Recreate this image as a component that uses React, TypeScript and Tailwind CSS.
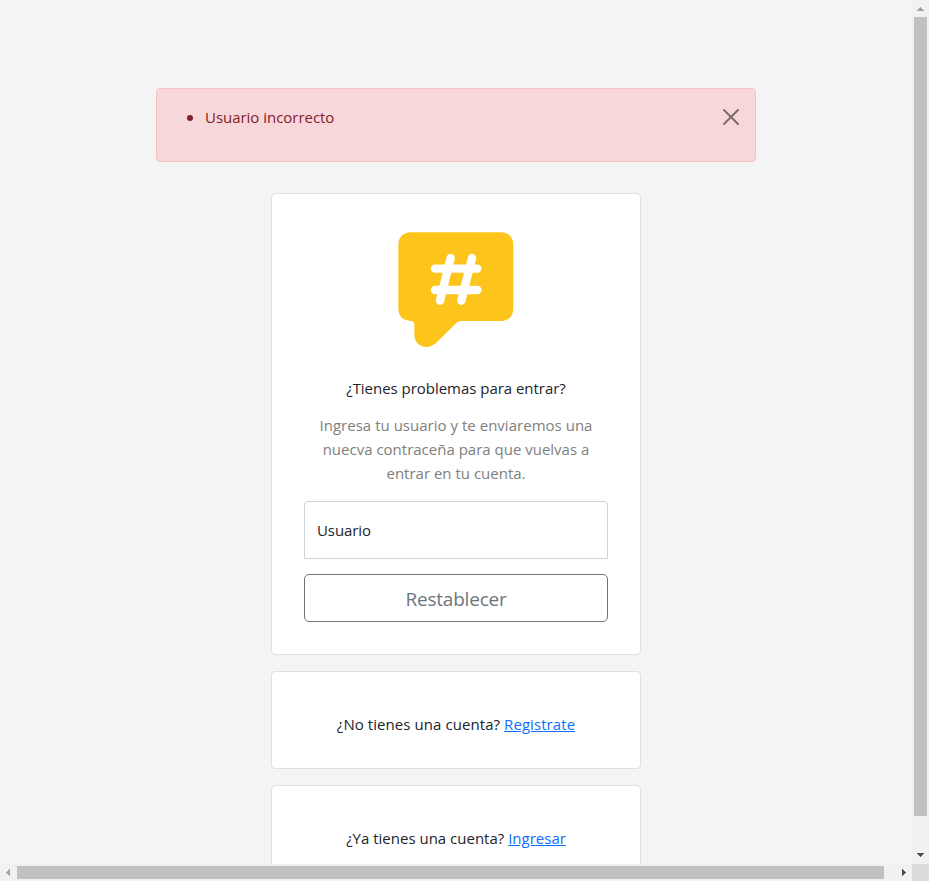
import type { ReactNode } from 'react';

function HashBubble() {
  return (
    <svg className="mx-auto block h-[116px] w-[116px]" viewBox="54 36 348 348" aria-hidden="true">
      <path
        fill="#fdc51b"
        d="M94 37H362Q400 39 400 76V264Q400 302 362 303H243Q235 303 229 309L169 368C145 391 103 383 103 343V314Q103 303 92 303Q55 300 55 264V76Q55 39 94 37Z"
      />
      <path
        d="M165 146H292M165 210H292M212 114L180 242M276 114L244 242"
        stroke="#fff"
        strokeWidth="25"
        strokeLinecap="round"
        fill="none"
      />
    </svg>
  );
}

function Card({ className, children }: { className: string; children: ReactNode }) {
  return (
    <section className={`w-[370px] shrink-0 rounded border border-[#dfdfdf] bg-white px-8 text-center ${className}`}>
      {children}
    </section>
  );
}

function Alert() {
  return (
    <div className="flex h-[74px] w-[600px] shrink-0 items-start justify-between rounded border border-[#f5c2c7] bg-[#f8d7da] py-4 pr-4 pl-[30px] text-[#842029]">
      <div className="flex items-center">
        <span className="mt-px mr-[12px] h-1.5 w-1.5 rounded-full bg-[#842029]" />
        <span className="tracking-[-0.03px]">Usuario incorrecto</span>
      </div>
      <button className="mt-1 flex h-4 w-4" aria-label="Cerrar">
        <svg viewBox="0 0 16 16" className="h-4 w-4" stroke="#7c6c6d" strokeWidth="2" strokeLinecap="round">
          <path d="M1 1L15 15M15 1L1 15" />
        </svg>
      </button>
    </div>
  );
}

export default function App() {
  return (
    <div className="grid h-[881px] w-[929px] grid-cols-[912px_17px] grid-rows-[864px_17px] overflow-hidden bg-[#f4f4f4] font-['Open_Sans','Noto_Sans',sans-serif] text-[15px] leading-6 text-[#212529]">
      <main className="flex flex-col items-center overflow-hidden pt-[88px]">
        <Alert />
        <Card className="mt-[31px] h-[462px] pt-[38px]">
          <HashBubble />
          <p className="mt-[28px] whitespace-nowrap">
            <span className="tracking-[-0.03px]">¿Tienes problemas para entrar?</span>
          </p>
          <p className="mt-[13px] whitespace-nowrap text-[#808080]">
            <span className="tracking-[0.02px]">Ingresa tu usuario y te enviaremos una</span>
            <br />
            <span>nuecva contraceña para que vuelvas a</span>
            <br />
            <span>entrar en tu cuenta.</span>
          </p>
          <div className="mt-[16px] flex h-[58px] items-center rounded-t border border-[#ced4da] px-3">
            <span className="tracking-[-0.1px]">Usuario</span>
          </div>
          <button className="mt-[15px] flex h-12 w-full items-center justify-center rounded-[5px] border border-[#6c757d] pt-px text-[19px] text-[#6c757d]">
            <span className="tracking-[-0.2px]">Restablecer</span>
          </button>
        </Card>
        <Card className="mt-4 h-[98px] pt-[40px]">
          <p className="whitespace-nowrap tracking-[0.07px]">
            <span>¿No tienes una cuenta? </span>
            <a className="text-[#0d6efd] underline">Registrate</a>
          </p>
        </Card>
        <Card className="mt-4 h-[98px] pt-[40px]">
          <p className="whitespace-nowrap">
            <span>¿Ya tienes una cuenta? </span>
            <a className="text-[#0d6efd] underline">Ingresar</a>
          </p>
        </Card>
      </main>
      <div className="flex flex-col items-center bg-[#f1f1f1]">
        <svg className="h-[17px] w-[17px] shrink-0" viewBox="0 0 17 17" shapeRendering="crispEdges">
          <path d="M5 11V10L8.5 7L12 10V11Z" fill="#a3a3a3" />
        </svg>
        <div className="h-[799px] w-[13px] bg-[#c1c1c1]" />
        <div className="grow" />
        <svg className="h-[17px] w-[17px] shrink-0" viewBox="0 0 17 17" shapeRendering="crispEdges">
          <path d="M5 6V7L8.5 10L12 7V6Z" fill="#505050" />
        </svg>
      </div>
      <div className="flex items-center bg-[#f1f1f1]">
        <svg className="h-[17px] w-[17px] shrink-0" viewBox="0 0 17 17" shapeRendering="crispEdges">
          <path d="M10 5H9L6 8.5L9 12H10Z" fill="#a3a3a3" />
        </svg>
        <div className="h-[13px] w-[867px] bg-[#c1c1c1]" />
        <div className="grow" />
        <svg className="h-[17px] w-[17px] shrink-0" viewBox="0 0 17 17" shapeRendering="crispEdges">
          <path d="M7 5H8L11 8.5L8 12H7Z" fill="#505050" />
        </svg>
      </div>
      <div className="bg-[#dcdcdc]" />
    </div>
  );
}
